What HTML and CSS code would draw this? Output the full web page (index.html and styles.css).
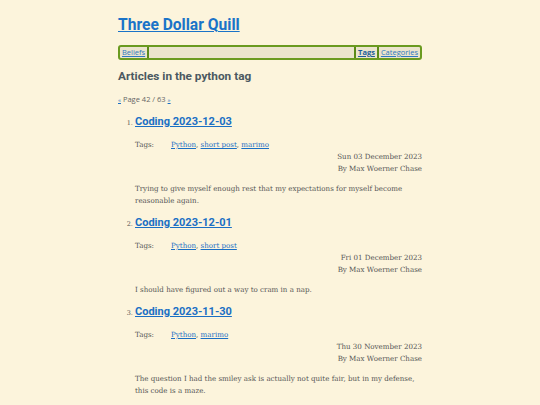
FILE: index.html
```html
<!DOCTYPE html>
<html lang="en">
<head>
<meta charset="utf-8">
<title>Articles in the python tag</title>
<link rel="stylesheet" href="styles.css">
</head>
<body>
<div class="page">
  <header class="site-header">
    <h1 class="site-title"><a href="#">Three Dollar Quill</a></h1>
    <nav class="menu">
      <a class="menu-item" href="#">Beliefs</a>
      <span class="menu-spacer"></span>
      <a class="menu-item current" href="#">Tags</a>
      <a class="menu-item" href="#">Categories</a>
    </nav>
  </header>
  <main>
    <h2 class="page-title">Articles in the python tag</h2>
    <p class="pager"><a href="#">«</a> Page 42 / 63 <a href="#">»</a></p>
    <ol class="articles">
      <li class="article">
        <h3 class="article-title"><a href="#">Coding 2023-12-03</a></h3>
        <div class="tags"><span class="tags-label">Tags:</span><span class="tags-list"><a href="#">Python</a>, <a href="#">short post</a>, <a href="#">marimo</a></span></div>
        <div class="meta"><div>Sun 03 December 2023</div><div>By Max Woerner Chase</div></div>
        <p class="summary">Trying to give myself enough rest that my expectations for myself become reasonable again.</p>
      </li>
      <li class="article">
        <h3 class="article-title"><a href="#">Coding 2023-12-01</a></h3>
        <div class="tags"><span class="tags-label">Tags:</span><span class="tags-list"><a href="#">Python</a>, <a href="#">short post</a></span></div>
        <div class="meta"><div>Fri 01 December 2023</div><div>By Max Woerner Chase</div></div>
        <p class="summary">I should have figured out a way to cram in a nap.</p>
      </li>
      <li class="article">
        <h3 class="article-title"><a href="#">Coding 2023-11-30</a></h3>
        <div class="tags"><span class="tags-label">Tags:</span><span class="tags-list"><a href="#">Python</a>, <a href="#">marimo</a></span></div>
        <div class="meta"><div>Thu 30 November 2023</div><div>By Max Woerner Chase</div></div>
        <p class="summary">The question I had the smiley ask is actually not quite fair, but in my defense, this code is a maze.</p>
      </li>
    </ol>
  </main>
</div>
</body>
</html>
```
FILE: styles.css
```css
html, body {
  margin: 0;
  padding: 0;
}
body {
  background: #fcf4dc;
  color: #555;
  font-family: "DejaVu Serif", serif;
  font-size: 7.1px;
  line-height: 12px;
}
a {
  color: #1a6fc4;
}
.page {
  width: 304px;
  margin: 0 auto;
  padding-top: 13px;
}
.site-title {
  margin: 0 0 8px;
  font-family: Roboto, sans-serif;
  font-size: 15.6px;
  font-weight: 700;
  line-height: 24px;
}
.site-title a {
  color: #1a73c8;
}
.menu {
  display: flex;
  height: 11px;
  border: 2px solid #6a9a20;
  border-radius: 3px;
  background: #ebe4cd;
  font-family: "Open Sans", sans-serif;
  font-size: 7.5px;
  line-height: 11px;
}
.menu-item {
  padding: 0 2px;
  color: #2f78c0;
}
.menu-item:first-child {
  border-right: 2px solid #5a8a18;
}
.menu-spacer {
  flex: 1;
  border-right: 2px solid #5a8a18;
}
.menu-item.current {
  font-weight: 700;
  border-right: 2px solid #5a8a18;
  color: #1c5c99;
}
.page-title {
  margin: 7px 0 0;
  font-family: Roboto, sans-serif;
  font-size: 11.8px;
  line-height: 18px;
  font-weight: 700;
  color: #4b5961;
}
.pager {
  margin: 8px 0 0;
  font-family: "Open Sans", sans-serif;
  font-size: 7.5px;
  color: #666;
}
.pager a {
  font-size: 6px;
}
.articles {
  margin: 7px 0 0;
  padding-left: 17px;
}
.article::marker {
  font-size: 6.5px;
  color: #555;
}
.article-title {
  margin: 0;
  font-family: Roboto, sans-serif;
  font-size: 11px;
  line-height: 18px;
  font-weight: 700;
}
.tags {
  display: flex;
  margin-top: 8px;
}
.tags-label {
  width: 36px;
}
.meta {
  text-align: right;
}
.summary {
  margin: 8px 0 7px;
}
```
